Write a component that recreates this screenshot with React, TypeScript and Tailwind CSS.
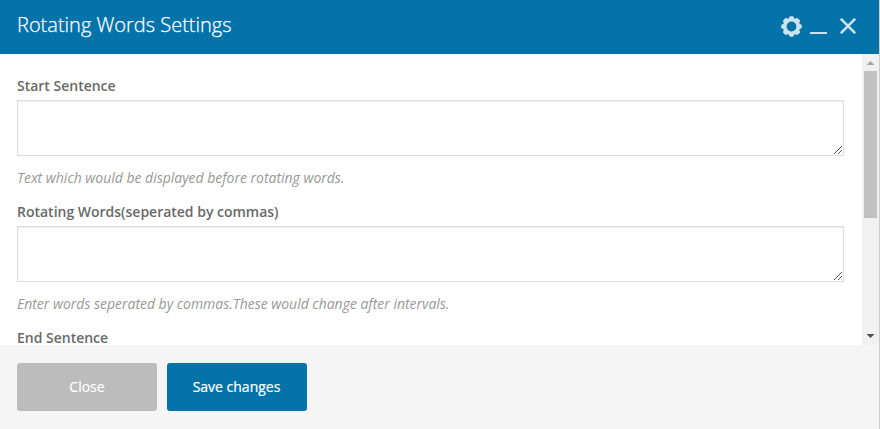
const Gear = () => (
  <svg width="21" height="21" viewBox="-10.5 -10.5 21 21" fill="#cce3ee">
    <path
      fillRule="evenodd"
      d="M-1.6-10.3H1.6L3-7.7L5.9-8.6L8.6-5.9L7.7-3L10.3-1.6V1.6L7.7 3L8.6 5.9L5.9 8.6L3 7.7L1.6 10.3H-1.6L-3 7.7L-5.9 8.6L-8.6 5.9L-7.7 3L-10.3 1.6V-1.6L-7.7-3L-8.6-5.9L-5.9-8.6L-3-7.7ZM0-4.9A4.9 4.9 0 1 0 0 4.9A4.9 4.9 0 1 0 0-4.9Z"
    />
  </svg>
);

const Close = () => (
  <svg width="16" height="16" viewBox="0 0 16 16" fill="none" stroke="#cce3ee" strokeWidth="2.6">
    <path d="M.8.8L15.2 15.2M15.2.8L.8 15.2" />
  </svg>
);

const Grip = () => (
  <svg className="mr-px mb-px" width="8" height="8" viewBox="0 0 8 8" fill="#555" shapeRendering="crispEdges">
    {[0, 1, 2, 3, 4, 5, 6, 7].map((i) => (
      <rect key={i} x={i} y={7 - i} width="1" height="1" />
    ))}
    {[4, 5, 6, 7].map((i) => (
      <rect key={`s${i}`} x={i} y={11 - i} width="1" height="1" />
    ))}
  </svg>
);

const Label = ({ text }: { text: string }) => (
  <div className="h-[26px] text-[14px] leading-[20px] font-semibold tracking-[-0.01px] whitespace-nowrap text-[#696969]">{text}</div>
);

const Field = ({ label, hint }: { label: string; hint: string }) => (
  <div className="h-[126px]">
    <Label text={label} />
    <div className="-mt-[2px] flex h-[56px] w-[827px] items-end justify-end border border-[#ddd] bg-white shadow-[inset_0_1px_2px_rgba(0,0,0,0.07)]">
      <Grip />
    </div>
    <div className="mt-[12px] text-[14px] leading-[20px] tracking-[-0.02px] whitespace-nowrap text-[#999] italic">{hint}</div>
  </div>
);

export default function App() {
  return (
    <div className="flex h-[429px] w-[880px] flex-col overflow-hidden border-r border-[#ccc] bg-white font-['Open_Sans',sans-serif]">
      <header className="flex h-[54px] shrink-0 items-start bg-[#0473aa] pl-[17px]">
        <h1 className="mt-[9px] w-[764px] text-[20px] leading-[32px] font-light whitespace-nowrap text-white [-webkit-text-stroke:0.25px_white]">
          Rotating Words Settings
        </h1>
        <div className="mt-[16px]"><Gear /></div>
        <div className="mt-[32px] ml-[8px] h-[2px] w-[17px] bg-[#cce3ee]" />
        <div className="mt-[18px] ml-[13px]"><Close /></div>
      </header>
      <main className="flex h-[291px] shrink-0 overflow-hidden">
        <div className="w-[862px] pt-[22px] pl-[17px]">
          <Field label="Start Sentence" hint="Text which would be displayed before rotating words." />
          <Field
            label="Rotating Words(seperated by commas)"
            hint="Enter words seperated by commas.These would change after intervals."
          />
          <Label text="End Sentence" />
        </div>
        <div className="flex w-[17px] shrink-0 flex-col items-center bg-[#f1f1f1]">
          <svg className="shrink-0" width="17" height="17" viewBox="0 0 17 17" fill="#a3a3a3">
            <path d="M8.5 7L12.5 11H4.5Z" />
          </svg>
          <div className="h-[147px] w-[13px] bg-[#c1c1c1]" />
          <svg className="mt-auto shrink-0" width="17" height="17" viewBox="0 0 17 17" fill="#505050">
            <path d="M4.5 6H12.5L8.5 10Z" />
          </svg>
        </div>
      </main>
      <footer className="flex h-[84px] shrink-0 gap-[10px] bg-[#f5f5f5] pt-[18px] pl-[17px] text-[14px]">
        <button className="h-[48px] w-[140px] rounded-[3px] bg-[#bcbcbc] pb-[2px] text-white [-webkit-text-stroke:0.2px_white]">Close</button>
        <button className="h-[48px] w-[140px] rounded-[3px] bg-[#0473aa] pr-[1px] pb-[2px] text-white [-webkit-text-stroke:0.2px_white]">Save changes</button>
      </footer>
    </div>
  );
}
